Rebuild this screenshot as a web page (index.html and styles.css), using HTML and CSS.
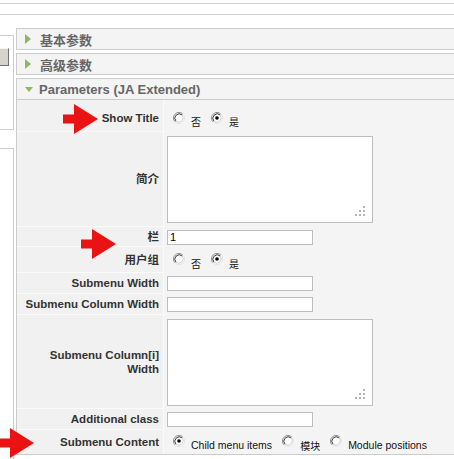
FILE: index.html
```html
<!DOCTYPE html>
<html>
<head>
<meta charset="utf-8">
<title>Parameters</title>
<link rel="stylesheet" href="styles.css">
</head>
<body>
<svg class="defs" width="0" height="0" aria-hidden="true">
  <defs>
    <symbol id="radio" viewBox="0 0 12 12">
      <circle cx="6" cy="6" r="5.5" fill="#fff"/>
      <path d="M2.1 9.9 A5.5 5.5 0 0 1 9.9 2.1" fill="none" stroke="#8a8a8a" stroke-width="1"/>
      <path d="M9.9 2.1 A5.5 5.5 0 0 1 2.1 9.9" fill="none" stroke="#e2e2e2" stroke-width="1"/>
      <path d="M2.9 9.1 A4.4 4.4 0 0 1 9.1 2.9" fill="none" stroke="#3c3c3c" stroke-width="1"/>
      <path d="M9.1 2.9 A4.4 4.4 0 0 1 2.9 9.1" fill="none" stroke="#cfcfcf" stroke-width="1"/>
    </symbol>
    <symbol id="radio-on" viewBox="0 0 12 12">
      <use href="#radio"/>
      <circle cx="6" cy="6" r="1.8" fill="#000"/>
    </symbol>
    <symbol id="grip" viewBox="0 0 12 12">
      <rect x="8" y="0" width="2" height="2" fill="#b5b5b5"/>
      <rect x="4" y="4" width="2" height="2" fill="#b5b5b5"/>
      <rect x="8" y="4" width="2" height="2" fill="#b5b5b5"/>
      <rect x="0" y="8" width="2" height="2" fill="#b5b5b5"/>
      <rect x="4" y="8" width="2" height="2" fill="#b5b5b5"/>
      <rect x="8" y="8" width="2" height="2" fill="#b5b5b5"/>
    </symbol>
    <symbol id="arrow" viewBox="0 0 35 31">
      <polygon points="0,10.5 11,10.5 11,0 35,15 11,30 11,19.5 0,19.5" fill="#ea1212"/>
    </symbol>
  </defs>
</svg>

<div class="topbar"></div>

<div class="main">
  <div class="side">
    <div class="sidebox sidebox-top"><div class="sidebtn"></div></div>
    <div class="sidebox sidebox-bottom"></div>
  </div>

  <div class="panes">
    <div class="pane">
      <div class="pane-head"><span class="tri-right"></span>基本参数</div>
    </div>
    <div class="pane">
      <div class="pane-head"><span class="tri-right"></span>高级参数</div>
    </div>
    <div class="pane pane-open">
      <div class="pane-head pane-head-open"><span class="tri-down"></span>Parameters (JA Extended)</div>

      <div class="row r-showtitle">
        <div class="key">Show Title</div>
        <div class="val">
          <svg class="radio radio-first"><use href="#radio"/></svg><span class="opt opt-cjk">否</span>
          <svg class="radio"><use href="#radio-on"/></svg><span class="opt opt-cjk">是</span>
        </div>
      </div>

      <div class="row r-textarea">
        <div class="key">简介</div>
        <div class="val">
          <div class="ta-wrap"><textarea class="ta"></textarea><svg class="grip"><use href="#grip"/></svg></div>
        </div>
      </div>

      <div class="row r-input">
        <div class="key">栏</div>
        <div class="val"><input class="txt" type="text" value="1"></div>
      </div>

      <div class="row r-radio">
        <div class="key">用户组</div>
        <div class="val">
          <svg class="radio radio-first"><use href="#radio"/></svg><span class="opt opt-cjk">否</span>
          <svg class="radio"><use href="#radio-on"/></svg><span class="opt opt-cjk">是</span>
        </div>
      </div>

      <div class="row r-input2">
        <div class="key">Submenu Width</div>
        <div class="val"><input class="txt" type="text" value=""></div>
      </div>

      <div class="row r-input2">
        <div class="key">Submenu Column Width</div>
        <div class="val"><input class="txt" type="text" value=""></div>
      </div>

      <div class="row r-textarea2">
        <div class="key">Submenu Column[i]<br>Width</div>
        <div class="val">
          <div class="ta-wrap"><textarea class="ta"></textarea><svg class="grip"><use href="#grip"/></svg></div>
        </div>
      </div>

      <div class="row r-input2">
        <div class="key">Additional class</div>
        <div class="val"><input class="txt" type="text" value=""></div>
      </div>

      <div class="row r-last">
        <div class="key">Submenu Content</div>
        <div class="val">
          <svg class="radio radio-first"><use href="#radio-on"/></svg><span class="opt opt-en">Child menu items</span>
          <svg class="radio"><use href="#radio"/></svg><span class="opt opt-cjk">模块</span>
          <svg class="radio"><use href="#radio"/></svg><span class="opt opt-en">Module positions</span>
        </div>
      </div>
    </div>
  </div>
</div>

<svg class="arrow arrow-1"><use href="#arrow"/></svg>
<svg class="arrow arrow-2"><use href="#arrow"/></svg>
<svg class="arrow arrow-3"><use href="#arrow"/></svg>
</body>
</html>
```

FILE: styles.css
```css
* {
  box-sizing: border-box;
}

html,
body {
  margin: 0;
  padding: 0;
  background: #ffffff;
  overflow: hidden;
}

body {
  position: relative;
  width: 454px;
  height: 459px;
  font-family: "Liberation Sans", Arial, "Noto Sans CJK SC", sans-serif;
  color: #333;
}

.defs {
  position: absolute;
  width: 0;
  height: 0;
}

.topbar {
  margin-top: 3px;
  height: 12px;
  border-top: 1px solid #cfcfcf;
  border-bottom: 1px solid #cfcfcf;
}

.main {
  display: flex;
  margin-top: 13px;
}

.side {
  flex: none;
  width: 14px;
}

.sidebox {
  border-top: 1px solid #cccccc;
  border-right: 1px solid #cccccc;
}

.sidebox-top {
  margin-top: 7px;
  height: 95px;
  border-bottom: 1px solid #cccccc;
  padding-top: 12px;
}

.sidebtn {
  width: 9px;
  height: 18px;
  background: #d6d3cd;
  border-top: 1px solid #f4f4f4;
  border-right: 1px solid #6f6f6f;
  border-bottom: 1px solid #6f6f6f;
}

.sidebox-bottom {
  margin-top: 18px;
  height: 320px;
}

.panes {
  flex: none;
  width: 460px;
  margin-left: 2px;
}

.pane {
  border: 1px solid #cccccc;
  margin-bottom: 3px;
  background: #f4f4f4;
}

.pane-head {
  height: 20px;
  display: flex;
  align-items: center;
  padding-left: 8px;
  font-size: 13px;
  font-weight: bold;
  color: #666666;
}

.pane-head-open {
  height: 21px;
  border-bottom: 1px solid #cccccc;
}

.tri-right {
  width: 0;
  height: 0;
  border-top: 5px solid transparent;
  border-bottom: 5px solid transparent;
  border-left: 6px solid #8cb863;
  margin-right: 9px;
}

.tri-down {
  width: 0;
  height: 0;
  border-left: 4.5px solid transparent;
  border-right: 4.5px solid transparent;
  border-top: 5px solid #8cb863;
  margin-right: 6px;
}

.row {
  display: flex;
}

.key {
  flex: none;
  width: 147px;
  display: flex;
  align-items: center;
  justify-content: flex-end;
  text-align: right;
  padding-right: 4px;
  background: #f1f1f1;
  border-right: 1px solid #fbfbfb;
  border-bottom: 1px solid #fbfbfb;
  font-size: 11.5px;
  font-weight: bold;
  color: #333333;
  line-height: 14px;
}

.val {
  flex: 1;
  display: flex;
  align-items: center;
  padding-left: 3px;
}

.r-showtitle {
  height: 32px;
}

.r-showtitle .key,
.r-showtitle .val {
  padding-top: 5px;
}

.r-textarea {
  height: 95px;
}

.r-input {
  height: 20px;
}

.r-radio {
  height: 26px;
}

.r-input2 {
  height: 21px;
}

.r-textarea2 {
  height: 94px;
}

.r-last {
  height: 24px;
}

.r-last .key {
  border-bottom: none;
}

.txt {
  width: 146px;
  height: 15px;
  margin: 0;
  padding: 0 2px;
  border: 1px solid #bdbdbd;
  background: #ffffff;
  font-family: "Liberation Sans", Arial, sans-serif;
  font-size: 11px;
  color: #000;
  outline: none;
}

.ta-wrap {
  position: relative;
  width: 206px;
  height: 87px;
}

.ta {
  display: block;
  width: 206px;
  height: 87px;
  margin: 0;
  border: 1px solid #bdbdbd;
  background: #ffffff;
  resize: none;
  outline: none;
}

.grip {
  position: absolute;
  right: 6px;
  bottom: 5px;
  width: 12px;
  height: 12px;
}

.radio {
  flex: none;
  width: 12px;
  height: 12px;
  margin: 0 6px 2px 10px;
}

.radio-first {
  margin-left: 6px;
}

.opt {
  padding-top: 7px;
  color: #111;
  white-space: nowrap;
}

.opt-cjk {
  font-family: "Noto Sans CJK SC", sans-serif;
  font-size: 10px;
  line-height: 12px;
}

.opt-en {
  font-family: "Liberation Sans", Arial, sans-serif;
  font-size: 10.5px;
  line-height: 12px;
  padding-top: 5px;
}

.arrow {
  position: absolute;
  width: 35px;
  height: 31px;
}

.arrow-1 {
  left: 63px;
  top: 104px;
}

.arrow-2 {
  left: 81px;
  top: 229px;
}

.arrow-3 {
  left: -1px;
  top: 428px;
}
```
